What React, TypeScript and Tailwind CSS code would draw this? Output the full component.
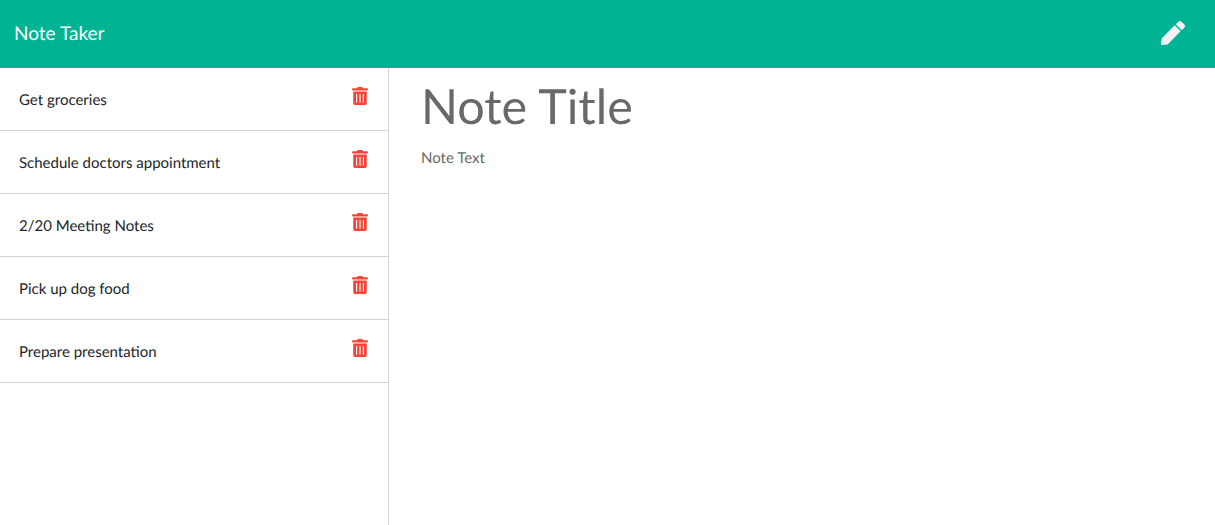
import { FaPen, FaTrashAlt } from 'react-icons/fa';

const notes = [
  'Get groceries',
  'Schedule doctors appointment',
  '2/20 Meeting Notes',
  'Pick up dog food',
  'Prepare presentation',
];

export default function App() {
  return (
    <div className="h-[525px] flex flex-col overflow-hidden bg-white font-['Lato',sans-serif] [text-rendering:geometricPrecision]">
      <nav className="h-[68px] shrink-0 bg-[#00b493] flex items-center justify-between pl-[14px] pr-[30px]">
        <span className="text-[19px] leading-[24px] mb-[1px] text-white">Note Taker</span>
        <FaPen className="text-[#f1f3f3] w-[24px] h-[24px] mb-[3px]" />
      </nav>
      <div className="flex flex-1">
        <aside className="w-[389px] border-r border-[#d4d4d4]">
          <ul>
            {notes.map(note => (
              <li
                key={note}
                className="h-[63px] border-b border-[#d4d4d4] flex items-center justify-between pl-[19px] pr-[20px]"
              >
                <span className="text-[15px] leading-[24px] mt-[1px] text-[#212529]">{note}</span>
                <FaTrashAlt className="text-[#f44336] w-[16px] h-[18px] mb-[6px]" />
              </li>
            ))}
          </ul>
        </aside>
        <main className="flex-1 pl-[32px] pt-[5px]">
          <h1 className="text-[48.5px] leading-[67px] text-[#696969]">Note Title</h1>
          <p className="mt-[6px] text-[15px] leading-[24px] text-[#696969]">Note Text</p>
        </main>
      </div>
    </div>
  );
}
